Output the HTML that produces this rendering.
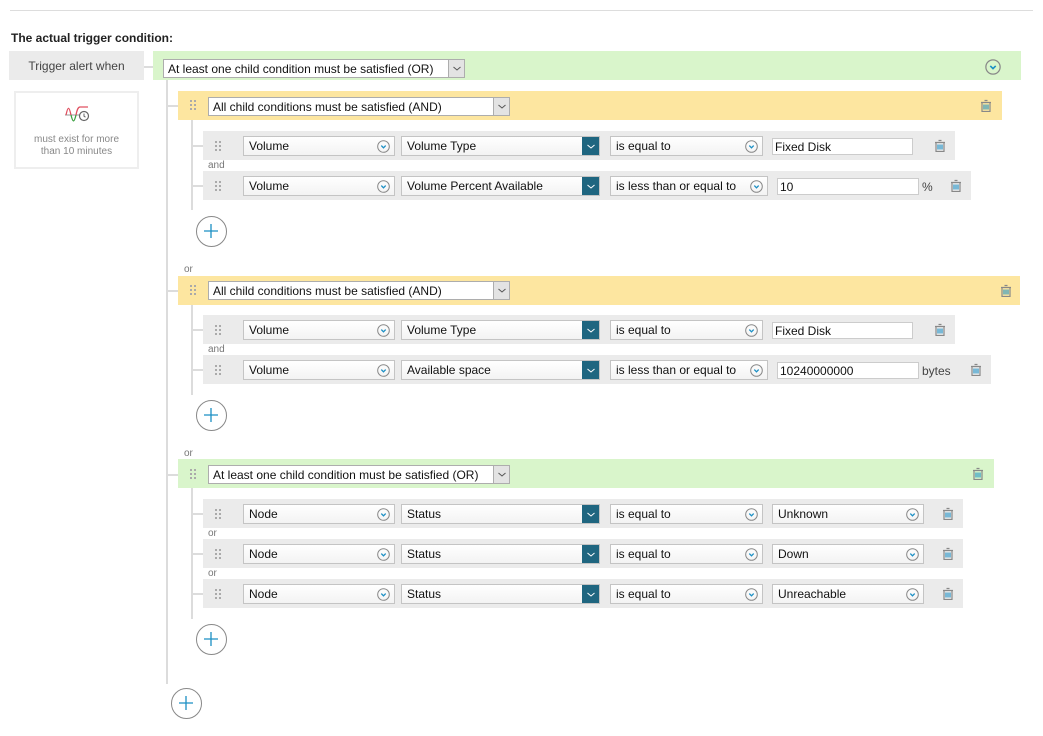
<!DOCTYPE html>
<html><head><meta charset="utf-8">
<style>
*{box-sizing:border-box;margin:0;padding:0}
body{width:1043px;height:736px;background:#fff;font-family:"Liberation Sans",sans-serif;font-size:12px;color:#111;position:relative;overflow:hidden}
.a{position:absolute}
.sel{position:absolute;height:20px;border:1px solid #c4c4c4;background:linear-gradient(#fff,#f3f3f3);padding-left:5px;line-height:19px;font-size:12px;white-space:nowrap;overflow:hidden}
.ch{position:absolute;right:4px;top:3px;width:13px;height:13px}
.dk{position:absolute;right:-1px;top:-1px;width:18px;height:20px;background:#1f6680}
.nat{position:absolute;height:19px;border:1px solid #adadad;background:#fff;padding-left:4px;line-height:18px;font-size:12px;white-space:nowrap}
.nb{position:absolute;right:0;top:0;width:16px;height:17px;background:#e3e3e3;border-left:1px solid #adadad}
.inp{position:absolute;height:17px;border:1px solid #ccc;background:#fff;padding-left:2px;line-height:16px;font-size:12px}
.row{position:absolute;height:29px;background:#ebebeb}
.lbl{position:absolute;font-size:10px;color:#777}
.vl{position:absolute;width:2px;background:#dcdcdc}
.hl{position:absolute;height:2px;background:#dcdcdc}
.plus{position:absolute;width:31px;height:31px;border:1.5px solid #888;border-radius:50%}
.plus svg{position:absolute;left:0;top:0}
</style></head><body>
<svg width="0" height="0" style="position:absolute">
<defs>
<symbol id="cc" viewBox="0 0 13 13"><circle cx="6.5" cy="6.5" r="5.8" fill="none" stroke="#888" stroke-width="1"/><path d="M4.3 5.6 6.5 7.8 8.7 5.6" fill="none" stroke="#1b8fc4" stroke-width="1.3"/></symbol>
<symbol id="tr" viewBox="0 0 12 13"><path d="M4.5 1.5h3M1 3.5h10M2 3.5v9h8v-9" fill="none" stroke="#888" stroke-width="1.2"/><path d="M4 5.5v5M6 5.5v5M8 5.5v5" stroke="#1b8fc4" stroke-width="1.1"/></symbol>
<symbol id="dt" viewBox="0 0 6 10"><g fill="#aaa"><rect x="0" y="0" width="2" height="2"/><rect x="4" y="0" width="2" height="2"/><rect x="0" y="4" width="2" height="2"/><rect x="4" y="4" width="2" height="2"/><rect x="0" y="8" width="2" height="2"/><rect x="4" y="8" width="2" height="2"/></g></symbol>
</defs></svg>

<div class="a" style="left:10px;top:10px;width:1023px;height:1px;background:#ddd"></div>
<div class="a" style="left:11px;top:31px;font-weight:bold;font-size:12px;color:#222">The actual trigger condition:</div>

<div class="a" style="left:9px;top:51px;width:135px;height:29px;background:#ebebeb;text-align:center;line-height:30px;color:#444">Trigger alert when</div>
<div class="hl" style="left:144px;top:66px;width:10px"></div>
<div class="a" style="left:153px;top:51px;width:868px;height:29px;background:#d9f5cb"></div>
<div class="nat" style="left:163px;top:59px;width:302px">At least one child condition must be satisfied (OR)<div class="nb"><svg width="16" height="17"><path d="M4.5 7 8 10 11.5 7" fill="none" stroke="#555"/></svg></div></div>
<svg class="a" style="left:985px;top:59px" width="16" height="16"><use href="#cc"/></svg>

<div class="a" style="left:14px;top:91px;width:125px;height:78px;border:2px solid #eee"></div>
<svg class="a" style="left:64px;top:104px" width="26" height="20" viewBox="0 0 26 20">
<path d="M1 11h22" stroke="#999" stroke-width="1"/>
<path d="M2 11C4 2 5 2 7 11" fill="none" stroke="#e05060" stroke-width="1.3"/>
<path d="M7 11C9 19 10 19 12 11" fill="none" stroke="#3aa040" stroke-width="1.3"/>
<path d="M12 11C13 6 14 3 16 3h8" fill="none" stroke="#e05060" stroke-width="1.3"/>
<circle cx="20" cy="12" r="4.5" fill="#fff" stroke="#666" stroke-width="1.2"/><path d="M20 9.5v2.7l1.5 1" fill="none" stroke="#666"/>
</svg>
<div class="a" style="left:16px;top:134px;width:121px;text-align:center;font-size:10px;line-height:12px;color:#888">must exist for more<br>than 10 minutes</div>

<div class="vl" style="left:166px;top:80px;height:604px"></div>

<!-- Group 1 -->
<div class="hl" style="left:168px;top:105px;width:10px"></div>
<div class="a" style="left:178px;top:91px;width:824px;height:29px;background:#fde6a0"></div>
<svg class="a" style="left:190px;top:100px" width="6" height="10"><use href="#dt"/></svg>
<div class="nat" style="left:208px;top:97px;width:302px">All child conditions must be satisfied (AND)<div class="nb"><svg width="16" height="17"><path d="M4.5 7 8 10 11.5 7" fill="none" stroke="#555"/></svg></div></div>
<svg class="a" style="left:980px;top:99px" width="12" height="13"><use href="#tr"/></svg>
<div class="vl" style="left:191px;top:120px;height:90px"></div>

<div class="hl" style="left:193px;top:145px;width:10px"></div>
<div class="row" style="left:203px;top:131px;width:752px"></div>
<div class="hl" style="left:193px;top:185px;width:10px"></div>
<div class="row" style="left:203px;top:171px;width:768px"></div>
<div class="lbl" style="left:208px;top:160px">and</div>

<!-- Group 2 -->
<div class="lbl" style="left:184px;top:264px">or</div>
<div class="hl" style="left:168px;top:290px;width:10px"></div>
<div class="a" style="left:178px;top:276px;width:842px;height:29px;background:#fde6a0"></div>
<svg class="a" style="left:190px;top:285px" width="6" height="10"><use href="#dt"/></svg>
<div class="nat" style="left:208px;top:281px;width:302px">All child conditions must be satisfied (AND)<div class="nb"><svg width="16" height="17"><path d="M4.5 7 8 10 11.5 7" fill="none" stroke="#555"/></svg></div></div>
<svg class="a" style="left:1000px;top:284px" width="12" height="13"><use href="#tr"/></svg>
<div class="vl" style="left:191px;top:305px;height:90px"></div>
<div class="hl" style="left:193px;top:329px;width:10px"></div>
<div class="row" style="left:203px;top:315px;width:752px"></div>
<div class="hl" style="left:193px;top:369px;width:10px"></div>
<div class="row" style="left:203px;top:355px;width:788px"></div>
<div class="lbl" style="left:208px;top:344px">and</div>

<!-- Group 3 -->
<div class="lbl" style="left:184px;top:448px">or</div>
<div class="hl" style="left:168px;top:474px;width:10px"></div>
<div class="a" style="left:178px;top:459px;width:816px;height:29px;background:#d9f5cb"></div>
<svg class="a" style="left:190px;top:469px" width="6" height="10"><use href="#dt"/></svg>
<div class="nat" style="left:208px;top:465px;width:302px">At least one child condition must be satisfied (OR)<div class="nb"><svg width="16" height="17"><path d="M4.5 7 8 10 11.5 7" fill="none" stroke="#555"/></svg></div></div>
<svg class="a" style="left:972px;top:467px" width="12" height="13"><use href="#tr"/></svg>
<div class="vl" style="left:191px;top:488px;height:131px"></div>
<div class="hl" style="left:193px;top:513px;width:10px"></div>
<div class="row" style="left:203px;top:499px;width:760px"></div>
<div class="hl" style="left:193px;top:553px;width:10px"></div>
<div class="row" style="left:203px;top:539px;width:760px"></div>
<div class="hl" style="left:193px;top:593px;width:10px"></div>
<div class="row" style="left:203px;top:579px;width:760px"></div>
<div class="lbl" style="left:208px;top:528px">or</div>
<div class="lbl" style="left:208px;top:568px">or</div>

<!-- row 1 -->
<svg class="a" style="left:215px;top:141px" width="6" height="10"><use href="#dt"/></svg>
<div class="sel" style="left:243px;top:136px;width:152px">Volume<svg class="ch"><use href="#cc"/></svg></div>
<div class="sel" style="left:401px;top:136px;width:199px">Volume Type<div class="dk"><svg width="18" height="20"><path d="M5.5 9 9 12 12.5 9" fill="none" stroke="#fff"/></svg></div></div>
<div class="sel" style="left:610px;top:136px;width:153px">is equal to<svg class="ch"><use href="#cc"/></svg></div>
<div class="inp" style="left:772px;top:138px;width:141px">Fixed Disk</div>
<svg class="a" style="left:934px;top:139px" width="12" height="13"><use href="#tr"/></svg>

<!-- row 2 -->
<svg class="a" style="left:215px;top:181px" width="6" height="10"><use href="#dt"/></svg>
<div class="sel" style="left:243px;top:176px;width:152px">Volume<svg class="ch"><use href="#cc"/></svg></div>
<div class="sel" style="left:401px;top:176px;width:199px">Volume Percent Available<div class="dk"><svg width="18" height="20"><path d="M5.5 9 9 12 12.5 9" fill="none" stroke="#fff"/></svg></div></div>
<div class="sel" style="left:610px;top:176px;width:158px">is less than or equal to<svg class="ch"><use href="#cc"/></svg></div>
<div class="inp" style="left:777px;top:178px;width:142px">10</div>
<div class="a" style="left:922px;top:180px;color:#444">%</div>
<svg class="a" style="left:950px;top:179px" width="12" height="13"><use href="#tr"/></svg>

<!-- row 3 -->
<svg class="a" style="left:215px;top:325px" width="6" height="10"><use href="#dt"/></svg>
<div class="sel" style="left:243px;top:320px;width:152px">Volume<svg class="ch"><use href="#cc"/></svg></div>
<div class="sel" style="left:401px;top:320px;width:199px">Volume Type<div class="dk"><svg width="18" height="20"><path d="M5.5 9 9 12 12.5 9" fill="none" stroke="#fff"/></svg></div></div>
<div class="sel" style="left:610px;top:320px;width:153px">is equal to<svg class="ch"><use href="#cc"/></svg></div>
<div class="inp" style="left:772px;top:322px;width:141px">Fixed Disk</div>
<svg class="a" style="left:934px;top:323px" width="12" height="13"><use href="#tr"/></svg>

<!-- row 4 -->
<svg class="a" style="left:215px;top:365px" width="6" height="10"><use href="#dt"/></svg>
<div class="sel" style="left:243px;top:360px;width:152px">Volume<svg class="ch"><use href="#cc"/></svg></div>
<div class="sel" style="left:401px;top:360px;width:199px">Available space<div class="dk"><svg width="18" height="20"><path d="M5.5 9 9 12 12.5 9" fill="none" stroke="#fff"/></svg></div></div>
<div class="sel" style="left:610px;top:360px;width:158px">is less than or equal to<svg class="ch"><use href="#cc"/></svg></div>
<div class="inp" style="left:777px;top:362px;width:142px">10240000000</div>
<div class="a" style="left:922px;top:364px;color:#444">bytes</div>
<svg class="a" style="left:970px;top:363px" width="12" height="13"><use href="#tr"/></svg>

<!-- rows 5-7 -->
<svg class="a" style="left:215px;top:509px" width="6" height="10"><use href="#dt"/></svg>
<div class="sel" style="left:243px;top:504px;width:152px">Node<svg class="ch"><use href="#cc"/></svg></div>
<div class="sel" style="left:401px;top:504px;width:199px">Status<div class="dk"><svg width="18" height="20"><path d="M5.5 9 9 12 12.5 9" fill="none" stroke="#fff"/></svg></div></div>
<div class="sel" style="left:610px;top:504px;width:153px">is equal to<svg class="ch"><use href="#cc"/></svg></div>
<div class="sel" style="left:772px;top:504px;width:152px">Unknown<svg class="ch"><use href="#cc"/></svg></div>
<svg class="a" style="left:942px;top:507px" width="12" height="13"><use href="#tr"/></svg>

<svg class="a" style="left:215px;top:549px" width="6" height="10"><use href="#dt"/></svg>
<div class="sel" style="left:243px;top:544px;width:152px">Node<svg class="ch"><use href="#cc"/></svg></div>
<div class="sel" style="left:401px;top:544px;width:199px">Status<div class="dk"><svg width="18" height="20"><path d="M5.5 9 9 12 12.5 9" fill="none" stroke="#fff"/></svg></div></div>
<div class="sel" style="left:610px;top:544px;width:153px">is equal to<svg class="ch"><use href="#cc"/></svg></div>
<div class="sel" style="left:772px;top:544px;width:152px">Down<svg class="ch"><use href="#cc"/></svg></div>
<svg class="a" style="left:942px;top:547px" width="12" height="13"><use href="#tr"/></svg>

<svg class="a" style="left:215px;top:589px" width="6" height="10"><use href="#dt"/></svg>
<div class="sel" style="left:243px;top:584px;width:152px">Node<svg class="ch"><use href="#cc"/></svg></div>
<div class="sel" style="left:401px;top:584px;width:199px">Status<div class="dk"><svg width="18" height="20"><path d="M5.5 9 9 12 12.5 9" fill="none" stroke="#fff"/></svg></div></div>
<div class="sel" style="left:610px;top:584px;width:153px">is equal to<svg class="ch"><use href="#cc"/></svg></div>
<div class="sel" style="left:772px;top:584px;width:152px">Unreachable<svg class="ch"><use href="#cc"/></svg></div>
<svg class="a" style="left:942px;top:587px" width="12" height="13"><use href="#tr"/></svg>

<!-- plus buttons -->
<div class="plus" style="left:196px;top:216px"><svg width="28" height="28"><path d="M14 7v14M7 14h14" stroke="#1b8fc4" stroke-width="1.3"/></svg></div>
<div class="plus" style="left:196px;top:400px"><svg width="28" height="28"><path d="M14 7v14M7 14h14" stroke="#1b8fc4" stroke-width="1.3"/></svg></div>
<div class="plus" style="left:196px;top:624px"><svg width="28" height="28"><path d="M14 7v14M7 14h14" stroke="#1b8fc4" stroke-width="1.3"/></svg></div>
<div class="plus" style="left:171px;top:688px"><svg width="28" height="28"><path d="M14 7v14M7 14h14" stroke="#1b8fc4" stroke-width="1.3"/></svg></div>
</body></html>
